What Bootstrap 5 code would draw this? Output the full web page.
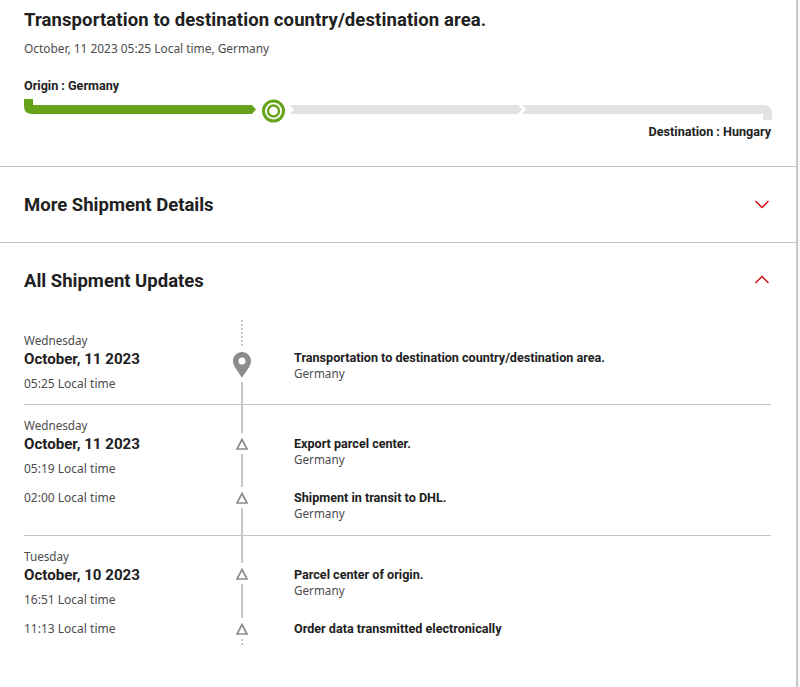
<!DOCTYPE html>
<html lang="en">
<head>
<meta charset="utf-8">
<title>Shipment</title>
<link rel="stylesheet" href="https://cdn.jsdelivr.net/npm/bootstrap@5.3.0/dist/css/bootstrap.min.css">
<style>
body{background:#f7f7f7;font-family:"Noto Sans","Liberation Sans",sans-serif;color:#212121;font-size:12px;}
.shell{width:798px;height:687px;background:#fff;border-right:2px solid #c9c9c9;overflow:hidden;}
.head-sec{height:167px;padding:10px 25px 0 24px;border-bottom:1px solid #c4c4c4;}
.main-title{font-family:Roboto,sans-serif;font-size:18.5px;letter-spacing:.1px;font-weight:700;line-height:20px;margin:0;}
.sub-line{font-size:11.9px;color:#4c4c4c;line-height:16px;margin:10px 0 0;}
.route-label{font-family:Roboto,sans-serif;font-size:12.6px;font-weight:700;line-height:16px;}
.origin-label{margin-top:22px;}
.track{height:24px;margin-top:5px;}
.track svg{display:block;flex:none;}
.ring-icon{margin:0 5px 0 6px;}
.dest-label{text-align:right;margin-top:1px;}
.acc-sec{height:76px;padding:0 26px 0 24px;border-bottom:1px solid #c4c4c4;}
.acc-sec.open{border-bottom:0;height:77px;padding-bottom:2px;}
.acc-title{font-family:Roboto,sans-serif;font-size:18.5px;font-weight:700;margin:0;line-height:22px;}
.chev-up{margin-bottom:4px;}
.tl{padding:0 25px 0 24px;}
.tl-group+.tl-group{border-top:1px solid #c4c4c4;}
.tl-row{display:flex;}
.tl-left{width:190px;flex:none;}
.tl-rail{width:56px;flex:none;display:flex;flex-direction:column;align-items:center;}
.tl-right{flex:1;padding-left:24px;}
.seg{width:2px;background:#c6c6c6;}
.seg.grow{flex:1;}
.seg.dots{background:repeating-linear-gradient(to bottom,#c6c6c6 0 2px,transparent 2px 4px);}
.seg-26{height:26px;}.seg-28{height:28px;}.seg-27{height:27px;}.seg-6{height:6px;}.seg-8{height:8px;}
.pin-icon{margin:6px 0 4px;display:block;}
.tri-icon{margin:5px 0 4px;display:block;}
.tl-weekday{color:#4c4c4c;line-height:16px;font-size:11.7px;}
.tl-date{font-family:Roboto,sans-serif;font-size:15.1px;font-weight:700;line-height:22px;}
.tl-time{color:#4c4c4c;line-height:16px;margin-top:6px;}
.tl-time.solo{margin-top:0;}
.tl-event{font-family:Roboto,sans-serif;font-size:12.6px;font-weight:700;line-height:16px;}
.tl-place{color:#4c4c4c;line-height:16px;font-size:11.7px;margin-top:-1px;}
.r1{height:84px;}.r2{height:76px;}.r3{height:54px;}
.lead-pad{padding-top:12px;}
.title-pad{padding-top:30px;}
.g-pad{padding-top:12px;}
.t-pad2{padding-top:31px;}
.t-pad3{padding-top:9px;}
</style>
</head>
<body>
<div class="shell">
  <section class="head-sec">
    <h1 class="main-title">Transportation to destination country/destination area.</h1>
    <p class="sub-line">October, 11 2023 05:25 Local time, Germany</p>
    <div class="route-label origin-label">Origin : Germany</div>
    <div class="track d-flex align-items-start">
      <svg width="232" height="15" viewBox="0 0 232 15"><path fill="#66a31b" d="M0 0H9V6H228L232 10.500L228 15H8Q0 15 0 7Z"/></svg>
      <svg class="ring-icon" width="23" height="24" viewBox="0 0 23 24"><circle cx="11.500" cy="12" r="10" fill="none" stroke="#66a31b" stroke-width="3"/><circle cx="11.500" cy="12" r="5.500" fill="none" stroke="#66a31b" stroke-width="2.400"/></svg>
      <svg width="232" height="15" viewBox="0 0 232 15"><path fill="#e3e3e3" d="M0 6H228L232 10.500L228 15H0L4 10.500Z"/></svg>
      <svg width="250" height="21" viewBox="0 0 250 21"><path fill="#e3e3e3" d="M0 6H241Q250 6 250 15V21H241V15H0L4 10.500Z"/></svg>
    </div>
    <div class="route-label dest-label">Destination : Hungary</div>
  </section>
  <section class="acc-sec d-flex justify-content-between align-items-center">
    <h2 class="acc-title">More Shipment Details</h2>
    <svg width="16" height="10" viewBox="0 0 16 10"><path d="M1.500 1L8 7.500L14.500 1" fill="none" stroke="#d40511" stroke-width="1.400"/></svg>
  </section>
  <section class="acc-sec open d-flex justify-content-between align-items-center">
    <h2 class="acc-title">All Shipment Updates</h2>
    <svg class="chev-up" width="16" height="10" viewBox="0 0 16 10"><path d="M1.500 9L8 2.500L14.500 9" fill="none" stroke="#d40511" stroke-width="1.400"/></svg>
  </section>
  <div class="tl">
    <div class="tl-group">
      <div class="tl-row r1">
        <div class="tl-left lead-pad">
          <div class="tl-weekday">Wednesday</div>
          <div class="tl-date">October, 11 2023</div>
          <div class="tl-time">05:25 Local time</div>
        </div>
        <div class="tl-rail">
          <div class="seg dots seg-26"></div>
          <svg class="pin-icon" width="18" height="26" viewBox="0 0 18 26"><path fill="#8c8c8c" fill-rule="evenodd" d="M9 0C4 0 0 4 0 9C0 15 6 20 9 26C12 20 18 15 18 9C18 4 14 0 9 0ZM9 5.500A3.500 3.500 0 1 1 9 12.500A3.500 3.500 0 1 1 9 5.500Z"/></svg>
          <div class="seg grow"></div>
        </div>
        <div class="tl-right title-pad">
          <div class="tl-event">Transportation to destination country/destination area.</div>
          <div class="tl-place">Germany</div>
        </div>
      </div>
    </div>
    <div class="tl-group">
      <div class="tl-row r2">
        <div class="tl-left g-pad">
          <div class="tl-weekday">Wednesday</div>
          <div class="tl-date">October, 11 2023</div>
          <div class="tl-time">05:19 Local time</div>
        </div>
        <div class="tl-rail">
          <div class="seg seg-28"></div>
          <svg class="tri-icon" width="12" height="12" viewBox="0 0 12 12"><path d="M6 1.500L11 11H1Z" fill="none" stroke="#8c8c8c" stroke-width="1.700"/></svg>
          <div class="seg grow"></div>
        </div>
        <div class="tl-right t-pad2">
          <div class="tl-event">Export parcel center.</div>
          <div class="tl-place">Germany</div>
        </div>
      </div>
      <div class="tl-row r3">
        <div class="tl-left t-pad3"><div class="tl-time solo">02:00 Local time</div></div>
        <div class="tl-rail">
          <div class="seg seg-6"></div>
          <svg class="tri-icon" width="12" height="12" viewBox="0 0 12 12"><path d="M6 1.500L11 11H1Z" fill="none" stroke="#8c8c8c" stroke-width="1.700"/></svg>
          <div class="seg grow"></div>
        </div>
        <div class="tl-right t-pad3">
          <div class="tl-event">Shipment in transit to DHL.</div>
          <div class="tl-place">Germany</div>
        </div>
      </div>
    </div>
    <div class="tl-group">
      <div class="tl-row r2">
        <div class="tl-left g-pad">
          <div class="tl-weekday">Tuesday</div>
          <div class="tl-date">October, 10 2023</div>
          <div class="tl-time">16:51 Local time</div>
        </div>
        <div class="tl-rail">
          <div class="seg seg-27"></div>
          <svg class="tri-icon" width="12" height="12" viewBox="0 0 12 12"><path d="M6 1.500L11 11H1Z" fill="none" stroke="#8c8c8c" stroke-width="1.700"/></svg>
          <div class="seg grow"></div>
        </div>
        <div class="tl-right t-pad2">
          <div class="tl-event">Parcel center of origin.</div>
          <div class="tl-place">Germany</div>
        </div>
      </div>
      <div class="tl-row">
        <div class="tl-left t-pad3"><div class="tl-time solo">11:13 Local time</div></div>
        <div class="tl-rail">
          <div class="seg seg-6"></div>
          <svg class="tri-icon" width="12" height="12" viewBox="0 0 12 12"><path d="M6 1.500L11 11H1Z" fill="none" stroke="#8c8c8c" stroke-width="1.700"/></svg>
          <div class="seg dots seg-8"></div>
        </div>
        <div class="tl-right t-pad3">
          <div class="tl-event">Order data transmitted electronically</div>
        </div>
      </div>
    </div>
  </div>
</div>
</body>
</html>
